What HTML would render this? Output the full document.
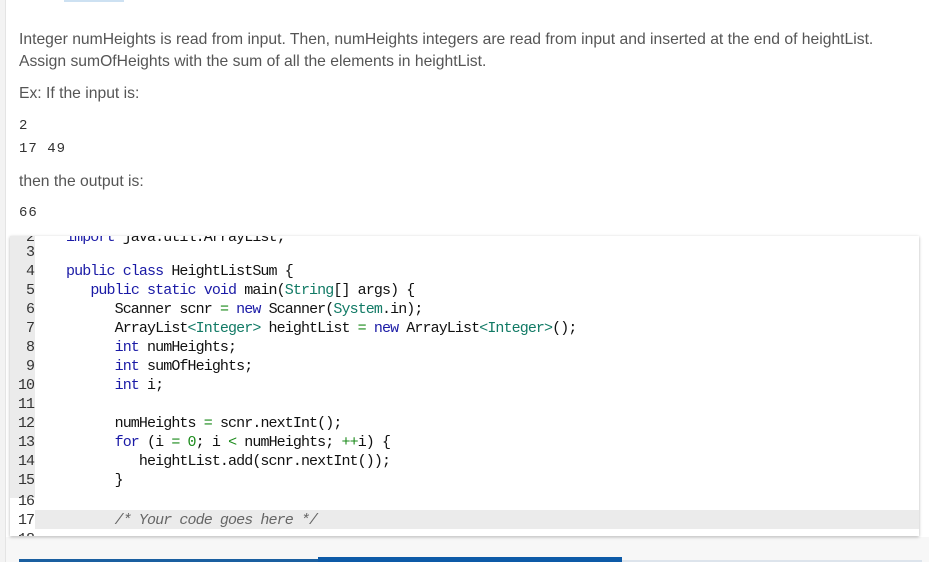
<!DOCTYPE html>
<html><head><style>
body{margin:0;width:929px;height:562px;overflow:hidden;background:#fff;font-family:"Liberation Sans",sans-serif;position:relative}
.edge{position:absolute;left:0;top:0;width:5px;height:562px;background:#f3f3f3;border-right:1px solid #e4e4e4}
.p{position:absolute;left:19px;font-size:15.7px;color:#555;line-height:22px}
.m{position:absolute;left:19px;font-family:"Liberation Mono",monospace;font-size:14px;letter-spacing:1px;color:#333}
.ed{position:absolute;left:10px;top:236px;width:909px;height:300px;background:#fff;box-shadow:0 1px 3px rgba(0,0,0,.3);overflow:hidden}
.gut{position:absolute;left:0;top:0;width:25px;height:262px;background:#ebebeb}
.ln{position:absolute;left:0;width:24px;text-align:right;font-family:"Liberation Mono",monospace;font-size:15px;letter-spacing:-1px;color:#333;height:19px;line-height:19px;margin-top:1px}
.cl{position:absolute;left:56px;font-family:"Liberation Mono",monospace;font-size:15px;letter-spacing:-0.9px;color:#111;white-space:pre;height:19px;line-height:19px;margin-top:1px}
.k{color:#1a1aa6}.t{color:#117a65}.o{color:#1a8a1a}.c{color:#666;font-style:italic}
.hl{position:absolute;left:25px;top:274px;width:884px;height:19px;background:#ebebeb}
.bot{position:absolute;left:6px;top:537px;width:923px;height:25px;background:#f7f7f7}
</style></head><body>
<div class="bot"></div>
<div class="edge"></div>
<div style="position:absolute;left:64px;top:0;width:60px;height:2px;background:#5b9bd5;opacity:.3"></div>
<div class="p" style="top:29px">Integer numHeights is read from input. Then, numHeights integers are read from input and inserted at the end of heightList.<br>Assign sumOfHeights with the sum of all the elements in heightList.</div>
<div class="p" style="top:83px">Ex: If the input is:</div>
<div class="m" style="top:118px">2</div>
<div class="m" style="top:141px">17 49</div>
<div class="p" style="top:171px">then the output is:</div>
<div class="m" style="top:205px">66</div>
<div class="ed">
<div class="gut"></div>
<div class="hl"></div>
<div class="ln" style="top:-9px">2</div><div class="cl" style="top:-9px"><span class="k">import</span> java.util.ArrayList;</div>
<div class="ln" style="top:6px">3</div>
<div class="ln" style="top:25px">4</div><div class="cl" style="top:25px"><span class="k">public class</span> HeightListSum {</div>
<div class="ln" style="top:44px">5</div><div class="cl" style="top:44px">   <span class="k">public static void</span> main(<span class="t">String</span>[] args) {</div>
<div class="ln" style="top:63px">6</div><div class="cl" style="top:63px">      Scanner scnr <span class="o">=</span> <span class="k">new</span> Scanner(<span class="t">System</span>.in);</div>
<div class="ln" style="top:82px">7</div><div class="cl" style="top:82px">      ArrayList<span class="t">&lt;Integer&gt;</span> heightList <span class="o">=</span> <span class="k">new</span> ArrayList<span class="t">&lt;Integer&gt;</span>();</div>
<div class="ln" style="top:101px">8</div><div class="cl" style="top:101px">      <span class="k">int</span> numHeights;</div>
<div class="ln" style="top:120px">9</div><div class="cl" style="top:120px">      <span class="k">int</span> sumOfHeights;</div>
<div class="ln" style="top:139px">10</div><div class="cl" style="top:139px">      <span class="k">int</span> i;</div>
<div class="ln" style="top:158px">11</div>
<div class="ln" style="top:177px">12</div><div class="cl" style="top:177px">      numHeights <span class="o">=</span> scnr.nextInt();</div>
<div class="ln" style="top:196px">13</div><div class="cl" style="top:196px">      <span class="k">for</span> (i <span class="o">=</span> <span class="o">0</span>; i <span class="o">&lt;</span> numHeights; <span class="o">++</span>i) {</div>
<div class="ln" style="top:215px">14</div><div class="cl" style="top:215px">         heightList.add(scnr.nextInt());</div>
<div class="ln" style="top:234px">15</div><div class="cl" style="top:234px">      }</div>
<div class="ln" style="top:255px">16</div>
<div class="ln" style="top:274px">17</div><div class="cl" style="top:274px">      <span class="c">/* Your code goes here */</span></div>
<div class="ln" style="top:293px">18</div>
</div>
<div style="position:absolute;left:19px;top:559px;width:299px;height:3px;background:#1a5fa0"></div>
<div style="position:absolute;left:318px;top:557px;width:304px;height:5px;background:#0d5aa7"></div>
<div style="position:absolute;left:622px;top:560px;width:300px;height:2px;background:#dde4ec"></div>
</body></html>
